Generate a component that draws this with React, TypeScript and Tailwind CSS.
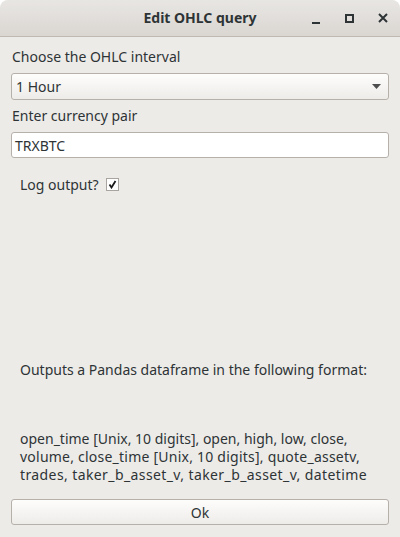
const FONT = { fontFamily: '"Noto Sans", "Open Sans", sans-serif' };

function TitleBar() {
  return (
    <div className="relative flex h-[37px] shrink-0 items-center justify-center rounded-t-[8px] border-b border-[#bfb9b2] bg-gradient-to-b from-[#e8e6e3] to-[#dad6d2]">
      <span className="-mt-[1px] text-[14px] font-bold text-[#2e3436]">Edit OHLC query</span>
      <div className="absolute right-0 top-0 flex h-full items-center">
        <button type="button" className="flex h-full w-[34px] items-center justify-center" aria-label="Minimize">
          <span className="mt-[9px] block h-[2px] w-[8px] bg-[#2e3436]" />
        </button>
        <button type="button" className="flex h-full w-[33px] items-center justify-center" aria-label="Maximize">
          <span className="block h-[9px] w-[9px] border-2 border-[#2e3436]" />
        </button>
        <button type="button" className="flex h-full w-[34px] items-center justify-center" aria-label="Close">
          <svg width="10" height="10" viewBox="0 0 10 10">
            <path d="M1 1 L9 9 M9 1 L1 9" stroke="#2e3436" strokeWidth="2" />
          </svg>
        </button>
      </div>
    </div>
  );
}

export default function App() {
  return (
    <div className="h-[537px] w-[400px] bg-white text-[14px] text-[#2e3436]" style={FONT}>
      <div className="flex h-full flex-col overflow-hidden rounded-t-[8px] bg-[#edebe8]">
        <TitleBar />
        <div className="flex flex-1 flex-col px-[11px]">
          <div className="mt-[10px] h-[20px] pl-[1px] leading-[20px]">Choose the OHLC interval</div>
          <div className="mt-[6px] flex h-[27px] items-center justify-between rounded-[3px] border border-[#b6b0aa] bg-gradient-to-b from-[#fdfdfc] to-[#eeece9] pl-[4px] pr-[7px]">
            <span>1 Hour</span>
            <svg width="9" height="5" viewBox="0 0 9 5">
              <path d="M0 0 H9 L4.5 5 Z" fill="#4d4d4d" />
            </svg>
          </div>
          <div className="mt-[6px] h-[20px] pl-[1px] leading-[20px]">Enter currency pair</div>
          <div className="mt-[6px] flex h-[26px] items-center rounded-[3px] border border-[#b6b0aa] bg-white pl-[3px]">
            TRXBTC
          </div>
          <div className="mt-[16px] flex h-[20px] items-center pl-[9px]">
            <span>Log output?</span>
            <span className="ml-[7px] flex h-[13px] w-[13px] items-center justify-center border border-[#a9a49f] bg-white">
              <svg width="9" height="9" viewBox="0 0 9 9">
                <path d="M1.5 4.5 L3.5 7.5 L7.5 1" stroke="#1a1a1a" strokeWidth="1.8" fill="none" />
              </svg>
            </span>
          </div>
          <div className="flex-1" />
          <div className="h-[20px] pl-[9px] leading-[20px]">Outputs a Pandas dataframe in the following format:</div>
          <div className="mt-[50px] pl-[9px] leading-[18px]">
            <span>open_time [Unix, 10 digits], open, high, low, close,</span>
            <br />
            <span className="tracking-[0.23px]">volume, close_time [Unix, 10 digits], quote_assetv,</span>
            <br />
            <span className="tracking-[0.4px]">trades, taker_b_asset_v, taker_b_asset_v, datetime</span>
          </div>
          <button
            type="button"
            className="mb-[12px] mt-[15px] flex h-[26px] items-center justify-center rounded-[3px] border border-[#b6b0aa] bg-gradient-to-b from-[#fdfdfc] to-[#eeece9] text-[#2e3436]"
          >
            Ok
          </button>
        </div>
      </div>
    </div>
  );
}
